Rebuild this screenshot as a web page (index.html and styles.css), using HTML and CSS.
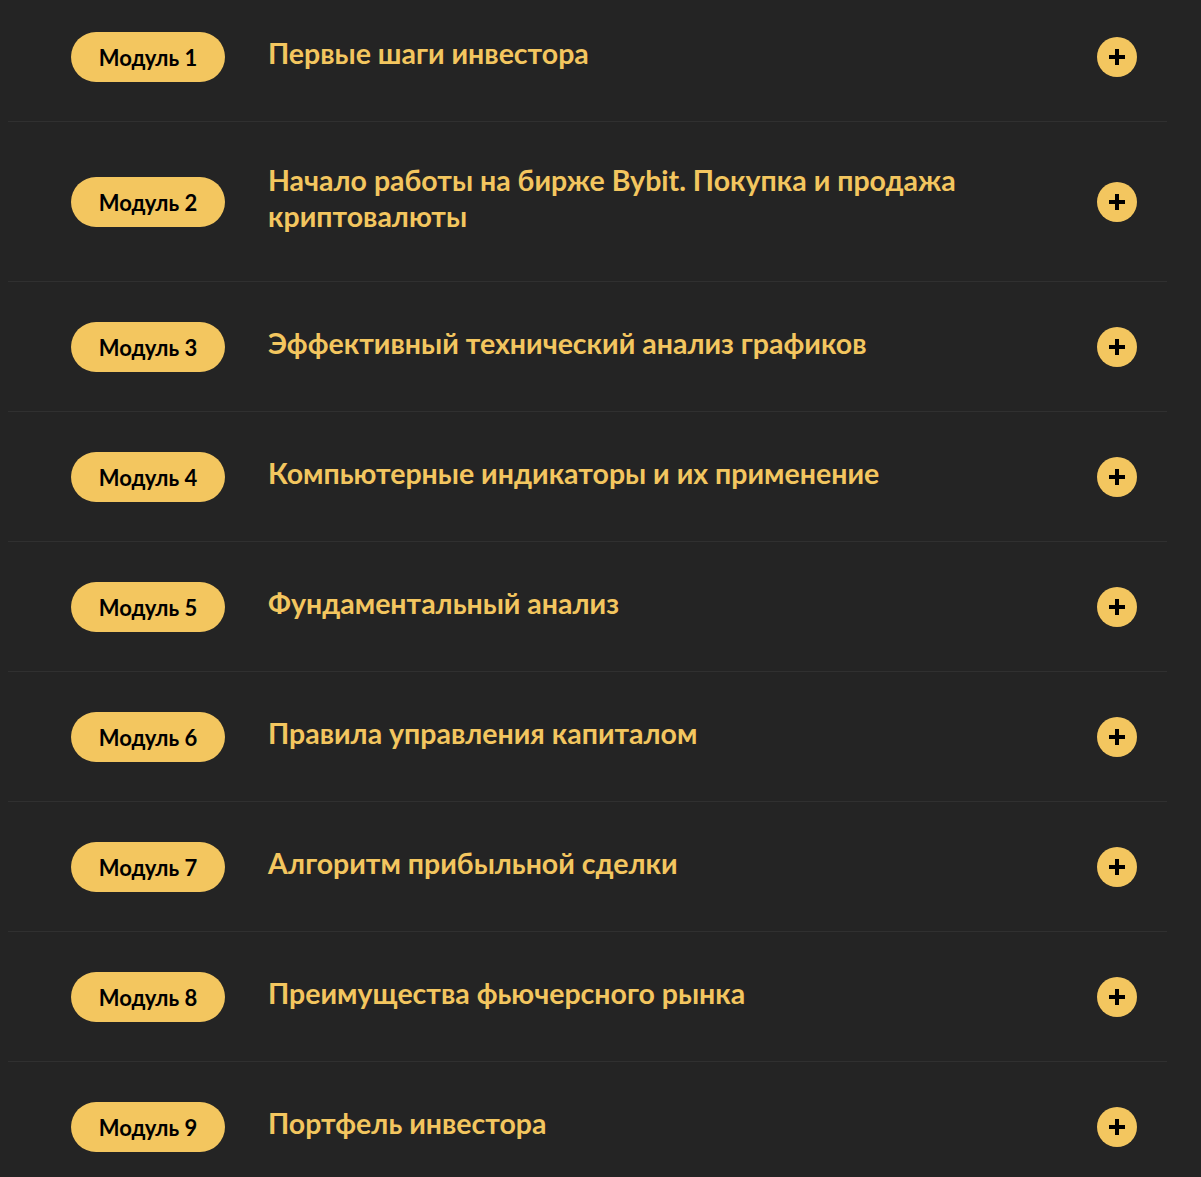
FILE: index.html
```html
<!DOCTYPE html>
<html lang="ru">
<head>
<meta charset="utf-8">
<link rel="stylesheet" href="styles.css">
</head>
<body>
<div class="list">
  <div class="row first"><span class="pill">Модуль 1</span><div class="title">Первые шаги инвестора</div><span class="plus"><svg viewBox="0 0 40 40" width="40" height="40"><path d="M20 12v16M12 20h16" stroke="#000" stroke-width="4"/></svg></span></div>
  <div class="row"><span class="pill">Модуль 2</span><div class="title">Начало работы на бирже Bybit. Покупка и продажа<br>криптовалюты</div><span class="plus"><svg viewBox="0 0 40 40" width="40" height="40"><path d="M20 12v16M12 20h16" stroke="#000" stroke-width="4"/></svg></span></div>
  <div class="row"><span class="pill">Модуль 3</span><div class="title">Эффективный технический анализ графиков</div><span class="plus"><svg viewBox="0 0 40 40" width="40" height="40"><path d="M20 12v16M12 20h16" stroke="#000" stroke-width="4"/></svg></span></div>
  <div class="row"><span class="pill">Модуль 4</span><div class="title">Компьютерные индикаторы и их применение</div><span class="plus"><svg viewBox="0 0 40 40" width="40" height="40"><path d="M20 12v16M12 20h16" stroke="#000" stroke-width="4"/></svg></span></div>
  <div class="row"><span class="pill">Модуль 5</span><div class="title">Фундаментальный анализ</div><span class="plus"><svg viewBox="0 0 40 40" width="40" height="40"><path d="M20 12v16M12 20h16" stroke="#000" stroke-width="4"/></svg></span></div>
  <div class="row"><span class="pill">Модуль 6</span><div class="title">Правила управления капиталом</div><span class="plus"><svg viewBox="0 0 40 40" width="40" height="40"><path d="M20 12v16M12 20h16" stroke="#000" stroke-width="4"/></svg></span></div>
  <div class="row"><span class="pill">Модуль 7</span><div class="title">Алгоритм прибыльной сделки</div><span class="plus"><svg viewBox="0 0 40 40" width="40" height="40"><path d="M20 12v16M12 20h16" stroke="#000" stroke-width="4"/></svg></span></div>
  <div class="row"><span class="pill">Модуль 8</span><div class="title">Преимущества фьючерсного рынка</div><span class="plus"><svg viewBox="0 0 40 40" width="40" height="40"><path d="M20 12v16M12 20h16" stroke="#000" stroke-width="4"/></svg></span></div>
  <div class="row"><span class="pill">Модуль 9</span><div class="title">Портфель инвестора</div><span class="plus"><svg viewBox="0 0 40 40" width="40" height="40"><path d="M20 12v16M12 20h16" stroke="#000" stroke-width="4"/></svg></span></div>
</div>
</body>
</html>
```
FILE: styles.css
```css
html, body {
  margin: 0;
  background: #242424;
}
body {
  padding: 0 34px 0 8px;
  font-family: Lato, "Open Sans", sans-serif;
  overflow: hidden;
}
.list {
  margin-top: -8px;
}
.row {
  display: flex;
  align-items: center;
  padding: 40px 30px 39px 63px;
  border-bottom: 1px solid #303030;
}
.pill {
  flex: none;
  width: 154px;
  height: 50px;
  border-radius: 25px;
  background: #f3c65f;
  color: #000;
  font-size: 22px;
  font-weight: 700;
  display: flex;
  align-items: center;
  justify-content: center;
}
.title {
  flex: 1;
  margin-left: 43px;
  padding: 0 0 8px;
  color: #f3c65f;
  font-size: 28.5px;
  font-weight: 700;
  line-height: 36px;
}
.plus {
  flex: none;
  width: 40px;
  height: 40px;
  border-radius: 50%;
  background: #f3c65f;
  display: block;
}
.plus svg {
  display: block;
}
```
